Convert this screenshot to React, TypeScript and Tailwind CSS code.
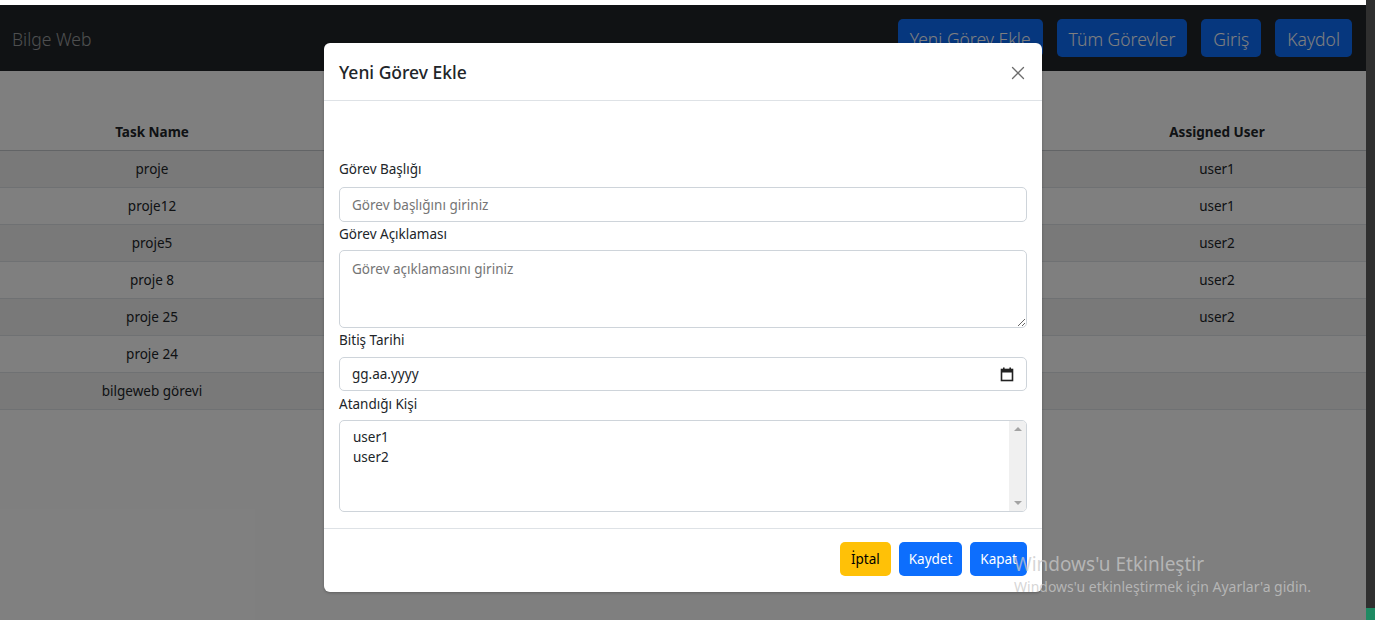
import { X } from 'lucide-react';

const rows = [
	{ name: 'proje', user: 'user1' },
	{ name: 'proje12', user: 'user1' },
	{ name: 'proje5', user: 'user2' },
	{ name: 'proje 8', user: 'user2' },
	{ name: 'proje 25', user: 'user2' },
	{ name: 'proje 24', user: '' },
	{ name: 'bilgeweb görevi', user: '' },
];

function NavButton({ label }: { label: string }) {
	return (
		<button className="h-[38px] px-3 pt-[3px] rounded-[5px] bg-[#0d6efd] text-white text-[17.5px] font-light leading-none">
			{label}
		</button>
	);
}

function Label({ children }: { children: string }) {
	return <div className="text-[13.5px] leading-[20px] text-[#212529]">{children}</div>;
}

export default function App() {
	return (
		<div
			className="relative w-[1375px] h-[620px] overflow-hidden bg-white flex"
			style={{ fontFamily: '"Noto Sans", "Open Sans", sans-serif' }}
		>
			{/* page */}
			<div className="relative flex-1 flex flex-col">
				<div className="h-[5px] bg-white" />
				<nav className="h-[66px] bg-[#212529] flex items-center justify-between pl-3 pr-[14px]">
					<span className="pt-[2px] text-[17.5px] font-light text-[#f2f2f2]/60">Bilge Web</span>
					<div className="flex gap-[14px]">
						<NavButton label="Yeni Görev Ekle" />
						<NavButton label="Tüm Görevler" />
						<NavButton label="Giriş" />
						<NavButton label="Kaydol" />
					</div>
				</nav>
				<main className="flex-1 pt-[43px]">
					<div className="grid grid-cols-[304px_382px_382px_1fr] text-[13.5px] text-[#212529]">
						<div className="h-[37px] flex items-center justify-center font-bold border-b border-[#c4c8cc]">Task Name</div>
						<div className="h-[37px] flex items-center justify-center font-bold border-b border-[#c4c8cc]">Description</div>
						<div className="h-[37px] flex items-center justify-center font-bold border-b border-[#c4c8cc]">Due Date</div>
						<div className="h-[37px] flex items-center justify-center font-bold border-b border-[#c4c8cc]">Assigned User</div>
						{rows.map((r, i) => (
							<div key={r.name} className="contents">
								{[r.name, '', '', r.user].map((c, j) => (
									<div
										key={j}
										className={`h-[37px] flex items-center justify-center border-b border-[#dee2e6] ${i % 2 === 0 ? 'bg-[#f2f2f2]' : 'bg-white'}`}
									>
										{c}
									</div>
								))}
							</div>
						))}
					</div>
				</main>
				{/* backdrop */}
				<div className="absolute left-0 right-0 top-[5px] bottom-0 bg-black/50" />
			</div>
			<div className="w-[9px] bg-[#2f2f2f] flex flex-col justify-end">
				<div className="h-[12px] bg-[#1f8a63]" />
			</div>

			{/* modal */}
			<div className="absolute left-[324px] top-[43px] w-[718px] h-[549px] bg-white rounded-[6px] shadow-[0_1px_3px_rgba(0,0,0,0.25)] flex flex-col text-[#212529]">
				<div className="h-[58px] flex items-center justify-between pl-[15px] pr-[13px] pt-[2px] border-b border-[#dee2e6]">
					<h5 className="text-[17.5px] font-medium">Yeni Görev Ekle</h5>
					<X className="w-[22px] h-[22px] text-[#6c6c6c]" strokeWidth={1.4} />
				</div>
				<div className="flex-1 px-[15px] pt-[58px] flex flex-col">
					<Label>Görev Başlığı</Label>
					<input
						className="mt-[8px] h-[35px] w-full rounded-[5px] border border-[#ced4da] px-3 text-[13.5px] outline-none placeholder:text-[#757575]"
						placeholder="Görev başlığını giriniz"
					/>
					<div className="mt-[2px]">
						<Label>Görev Açıklaması</Label>
					</div>
					<textarea
						className="mt-[6px] h-[78px] w-full rounded-[5px] border border-[#ced4da] px-3 py-[8px] text-[13.5px] outline-none placeholder:text-[#757575]"
						placeholder="Görev açıklamasını giriniz"
					/>
					<div className="mt-[2px]">
						<Label>Bitiş Tarihi</Label>
					</div>
					<div className="mt-[7px] h-[34px] w-full rounded-[5px] border border-[#ced4da] pl-3 pr-[12px] flex items-center justify-between text-[13.5px]">
						<span>gg.aa.yyyy</span>
						<svg width="14" height="15" viewBox="0 0 14 15" className="text-[#222]">
							<rect x="1.5" y="2.5" width="11" height="11" fill="none" stroke="currentColor" strokeWidth="1.6" />
							<rect x="1.5" y="2.5" width="11" height="3" fill="currentColor" />
							<rect x="3" y="0.5" width="1.6" height="3" fill="currentColor" />
							<rect x="9.4" y="0.5" width="1.6" height="3" fill="currentColor" />
						</svg>
					</div>
					<div className="mt-[3px]">
						<Label>Atandığı Kişi</Label>
					</div>
					<div className="mt-[6px] h-[92px] w-full rounded-[5px] border border-[#ced4da] flex overflow-hidden">
						<div className="flex-1 pl-[13px] pt-[6px] text-[13.5px] leading-[20px]">
							<div>user1</div>
							<div>user2</div>
						</div>
						<div className="w-[17px] bg-[#f0f0f0] flex flex-col items-center justify-between py-[6px]">
							<div className="w-0 h-0 border-l-[4px] border-r-[4px] border-b-[4px] border-l-transparent border-r-transparent border-b-[#a3a3a3]" />
							<div className="w-0 h-0 border-l-[4px] border-r-[4px] border-t-[4px] border-l-transparent border-r-transparent border-t-[#a3a3a3]" />
						</div>
					</div>
				</div>
				<div className="h-[64px] mt-[15px] pb-[3px] border-t border-[#dee2e6] flex items-center justify-end gap-[8px] pr-[15px] text-[13.5px]">
					<button className="h-[34px] px-[11px] rounded-[5px] bg-[#ffc107] text-black">İptal</button>
					<button className="h-[34px] px-[10px] rounded-[5px] bg-[#0d6efd] text-white">Kaydet</button>
					<button className="h-[34px] px-[10px] rounded-[5px] bg-[#0d6efd] text-white">Kapat</button>
				</div>
			</div>

			{/* windows watermark */}
			<div className="absolute left-[1014px] top-[551px] text-[rgba(200,200,200,0.75)] pointer-events-none">
				<div className="text-[19px] leading-[26px]">Windows'u Etkinleştir</div>
				<div className="text-[14px] leading-[20px]">Windows'u etkinleştirmek için Ayarlar'a gidin.</div>
			</div>
		</div>
	);
}
